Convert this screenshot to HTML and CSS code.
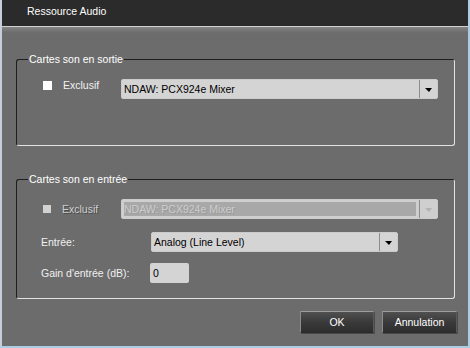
FILE: index.html
```html
<!DOCTYPE html>
<html lang="fr">
<head>
<meta charset="utf-8">
<title>Ressource Audio</title>
<link rel="stylesheet" href="styles.css">
</head>
<body>
<div class="window">
  <div class="titlebar">Ressource Audio</div>
  <div class="content">
    <fieldset class="group group-out">
      <legend>Cartes son en sortie</legend>
      <div class="row row-check">
        <div class="check">
          <span class="box"></span>
          <span class="check-label">Exclusif</span>
        </div>
        <div class="combo combo-wide">
          <span class="combo-text">NDAW: PCX924e Mixer</span>
          <span class="combo-btn"><span class="arrow"></span></span>
        </div>
      </div>
    </fieldset>
    <fieldset class="group group-in">
      <legend>Cartes son en entrée</legend>
      <div class="row row-check row-check-disabled">
        <div class="check disabled">
          <span class="box"></span>
          <span class="check-label">Exclusif</span>
        </div>
        <div class="combo combo-wide combo-disabled">
          <span class="combo-text">NDAW: PCX924e Mixer</span>
          <span class="combo-btn"><span class="arrow"></span></span>
        </div>
      </div>
      <div class="row row-field row-entree">
        <span class="field-label">Entrée:</span>
        <div class="combo combo-mid">
          <span class="combo-text">Analog (Line Level)</span>
          <span class="combo-btn"><span class="arrow"></span></span>
        </div>
      </div>
      <div class="row row-field row-gain">
        <span class="field-label">Gain d'entrée (dB):</span>
        <div class="input">0</div>
      </div>
    </fieldset>
    <div class="buttons">
      <button class="btn btn-ok">OK</button>
      <button class="btn btn-cancel">Annulation</button>
    </div>
  </div>
</div>
</body>
</html>
```

FILE: styles.css
```css
html, body {
  margin: 0;
  padding: 0;
  background: #6c6c6c;
}

.window {
  width: 470px;
  height: 348px;
  box-sizing: border-box;
  border-left: 2px solid #c4cfda;
  border-right: 2px solid #a9cde2;
  border-bottom: 2px solid #a9cde2;
  display: flex;
  flex-direction: column;
  font-family: "Liberation Sans", Arial, sans-serif;
  font-size: 10.5px;
  color: #f2f2f2;
  background: #6c6c6c;
  overflow: hidden;
}

.titlebar {
  height: 26px;
  flex: none;
  box-sizing: border-box;
  background: #2b2b2b;
  color: #ffffff;
  padding-left: 25px;
  line-height: 22px;
  font-size: 10.5px;
}

.content {
  flex: 1;
  border-top: 1px solid #d2d2d2;
  background: linear-gradient(#858585 0, #777777 3px, #6c6c6c 6px, #6c6c6c 100%);
  padding: 26px 11px 0 14px;
  display: flex;
  flex-direction: column;
}

.group {
  margin: 0 2px 0 0;
  padding: 0;
  border-style: solid;
  border-width: 1px;
  border-color: #1e1e1e #e2e2e2 #e2e2e2 #1e1e1e;
  border-radius: 3px;
  min-width: 0;
}

.group legend {
  margin-left: 11px;
  padding: 0 1px;
  line-height: 13px;
  color: #ffffff;
}

.group-out {
  padding-top: 13px;
  padding-bottom: 46px;
}

.group-in {
  margin-top: 27px;
  padding-top: 13px;
  padding-bottom: 15px;
}

.row {
  display: flex;
  align-items: flex-start;
  height: 20px;
}

.row-check {
  padding-left: 26px;
  padding-right: 16px;
}

.check {
  width: 78px;
  flex: none;
  display: flex;
  align-items: flex-start;
}

.box {
  width: 9px;
  height: 9px;
  margin-top: 2px;
  background: #ffffff;
  flex: none;
}

.check-label {
  margin-left: 11px;
  line-height: 13px;
  color: #f2f2f2;
}

.row-check-disabled .check {
  margin-top: 4px;
}

.check.disabled .box {
  background: #d2d2d2;
  width: 8px;
  height: 8px;
}

.check.disabled .check-label {
  color: #cfcfcf;
  text-shadow: 1px 1px 0 #4a4a4a;
}

.combo {
  height: 20px;
  box-sizing: border-box;
  background: #d4d4d4;
  border: 1px solid #cbcbcb;
  border-radius: 2px;
  display: flex;
  align-items: stretch;
  color: #000000;
}

.combo-wide {
  flex: 1;
}

.combo-text {
  flex: 1;
  padding-left: 2px;
  line-height: 19px;
  white-space: nowrap;
  overflow: hidden;
}

.combo-btn {
  width: 17px;
  flex: none;
  border-left: 1px solid #8c8c8c;
  display: flex;
  align-items: center;
  justify-content: center;
}

.arrow {
  width: 0;
  height: 0;
  border-left: 4px solid transparent;
  border-right: 3px solid transparent;
  border-top: 4px solid #000000;
  margin-top: 1px;
}

.combo-disabled {
  background: #cfcfcf;
  padding: 2px 0 2px 2px;
}

.combo-disabled .combo-text {
  background: #a8a8a8;
  color: #cdcdcd;
  line-height: 14px;
  padding-left: 0;
  text-shadow: 1px 1px 0 #9a9a9a;
}

.combo-disabled .combo-btn {
  margin: -2px 0;
  margin-left: 3px;
}

.combo-disabled .arrow {
  border-top-color: #b4b4b4;
}

.row-field {
  padding-left: 24px;
  align-items: center;
}

.row-entree {
  margin-top: 13px;
}

.row-gain {
  margin-top: 11px;
}

.field-label {
  width: 110px;
  flex: none;
  color: #f0f0f0;
}

.combo-mid {
  width: 247px;
}

.row-gain .field-label {
  width: 109px;
}

.input {
  width: 39px;
  height: 20px;
  box-sizing: border-box;
  background: #d4d4d4;
  border-radius: 2px;
  color: #000000;
  padding-left: 3px;
  line-height: 20px;
}

.buttons {
  margin-top: 12px;
  display: flex;
  justify-content: flex-end;
  gap: 8px;
}

.btn {
  height: 22px;
  box-sizing: border-box;
  font-family: "Liberation Sans", Arial, sans-serif;
  font-size: 10.5px;
  color: #ffffff;
  background: linear-gradient(#505050, #3a3a3a 50%, #2e2e2e);
  border: 1px solid;
  border-color: #9c9c9c #5a5a5a #2a2a2a #8c8c8c;
  border-radius: 1px;
  padding: 0;
  box-shadow: 1px 1px 0 #4a4a4a;
}

.btn-ok {
  width: 74px;
}

.btn-cancel {
  width: 75px;
}
```
